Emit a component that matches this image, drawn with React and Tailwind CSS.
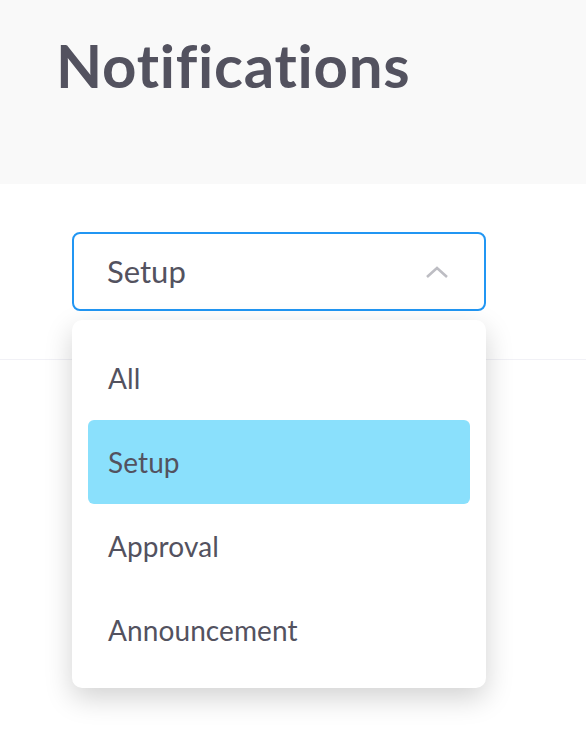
import React from 'react';

const options = ['All', 'Setup', 'Approval', 'Announcement'];

export default function App() {
    const selected = 'Setup';
    return (
        <div className="w-[586px] h-[736px] bg-white overflow-hidden text-[#53525f]" style={{ fontFamily: 'Lato, "Open Sans", sans-serif' }}>
            <div className="h-[184px] bg-[#f9f9f9] pl-[56px] pt-[25px]">
                <h1 className="text-[60px] font-bold leading-[80px] tracking-[0.75px]">Notifications</h1>
            </div>
            <div className="relative pt-[48px]">
                <div className="ml-[72px] w-[414px] h-[79px] border-2 border-[#2196f3] rounded-[8px] flex items-center justify-between pl-[33px] pr-[35px]">
                    <span className="text-[31px] leading-none">Setup</span>
                    <svg width="24" height="14" viewBox="0 0 24 14" fill="none">
                        <path d="M2 12 L12 3 L22 12" stroke="#bdbdc3" strokeWidth="2.6" />
                    </svg>
                </div>
                <div className="mt-[48px] h-px bg-[#f1f1f6]" />
                <div className="absolute left-[72px] top-[136px] w-[414px] bg-white rounded-[10px] shadow-[0_10px_28px_rgba(0,0,0,0.18)] py-[16px] px-[16px]">
                    {options.map(opt => (
                        <div
                            key={opt}
                            className={`h-[84px] flex items-center pl-[20px] rounded-[6px] text-[28px] tracking-[0.1px] ${opt === selected ? 'bg-[#8ae0fc]' : ''}`}
                        >
                            {opt}
                        </div>
                    ))}
                </div>
            </div>
        </div>
    );
}
